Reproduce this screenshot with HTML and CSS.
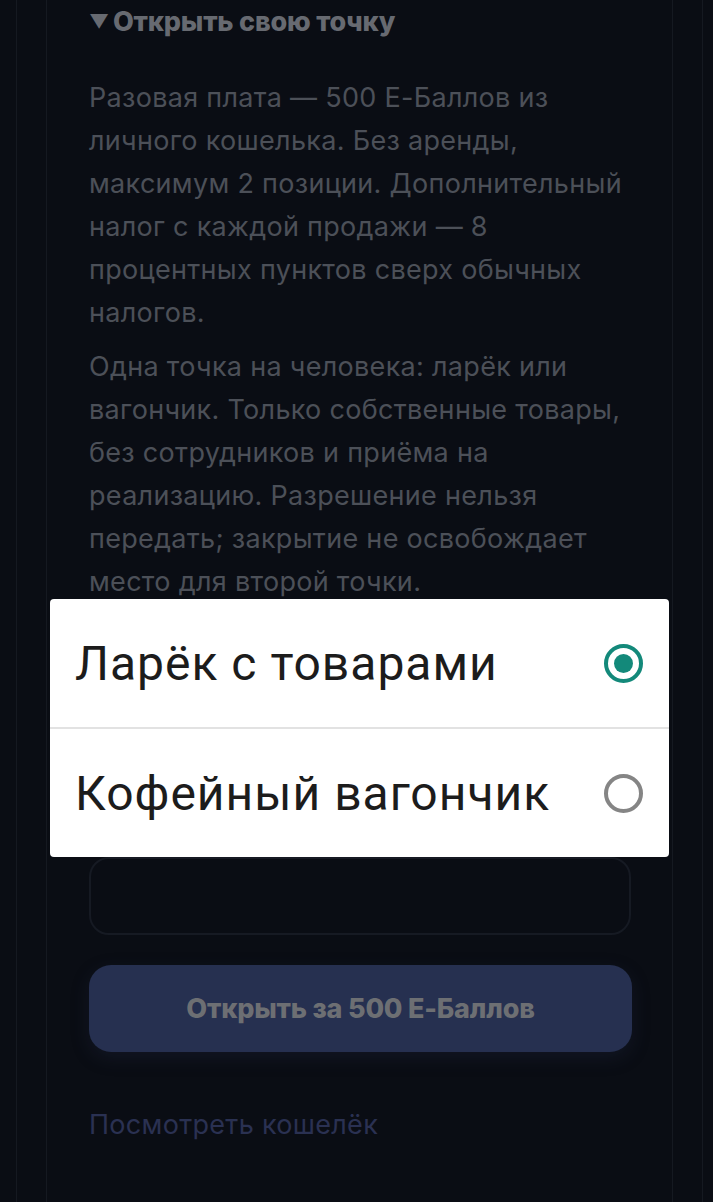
FILE: index.html
```html
<!DOCTYPE html>
<html lang="ru">
<head>
<meta charset="utf-8">
<title>Открыть свою точку</title>
<link rel="stylesheet" href="styles.css">
</head>
<body>
<div class="frame">
  <div class="panel">
    <div class="content">
      <div class="summary"><span class="tri">▼</span>Открыть свою точку</div>
      <p class="text first">Разовая плата — 500 Е-Баллов из личного кошелька. Без аренды, максимум 2 позиции. Дополнительный налог с каждой продажи — 8 процентных пунктов сверх обычных налогов.</p>
      <p class="text">Одна точка на человека: ларёк или вагончик. Только собственные товары, без сотрудников и приёма на реализацию. Разрешение нельзя передать; закрытие не освобождает место для второй точки.</p>
      <div class="hidden-fields">
        <div class="field-label">Тип точки</div>
        <div class="select-box">Ларёк с товарами</div>
        <div class="field-label">Название</div>
      </div>
      <div class="input-box"></div>
      <button class="btn">Открыть за 500 Е-Баллов</button>
      <a class="link">Посмотреть кошелёк</a>
    </div>
  </div>
</div>

<div class="dialog">
  <div class="option">
    <span class="opt-text">Ларёк с товарами</span>
    <span class="radio checked"></span>
  </div>
  <div class="option">
    <span class="opt-text">Кофейный вагончик</span>
    <span class="radio"></span>
  </div>
</div>
</body>
</html>
```

FILE: styles.css
```css
html, body {
  margin: 0;
  padding: 0;
  background: #0a0d14;
  height: 1202px;
  overflow: hidden;
}

body {
  font-family: Inter, "Noto Sans", sans-serif;
  position: relative;
}

.frame {
  margin-left: 16px;
  width: 685px;
  height: 1202px;
  border-left: 1px solid #151921;
  border-right: 1px solid #151921;
}

.panel {
  margin-left: 29px;
  width: 625px;
  height: 1202px;
  border-left: 1px solid #151921;
  border-right: 1px solid #151921;
}

.content {
  padding: 6px 35px 0 42px;
}

.summary {
  font-weight: 800;
  font-size: 27px;
  line-height: 32px;
  color: #676a71;
  letter-spacing: -0.2px;
  white-space: nowrap;
}

.tri {
  font-size: 19px;
  display: inline-block;
  margin-right: 4px;
  vertical-align: 3px;
}

.text {
  margin: 11px 0 0 0;
  font-size: 27px;
  line-height: 43px;
  color: #4c5058;
  letter-spacing: 0.3px;
}

.text.first {
  margin-top: 38px;
}

.hidden-fields {
  height: 254px;
  visibility: hidden;
}

.input-box {
  border: 2px solid #161a23;
  border-radius: 20px;
  box-sizing: border-box;
  height: 78px;
  margin-right: 6px;
}

.btn {
  display: block;
  width: calc(100% - 5px);
  margin-top: 30px;
  height: 87px;
  border: none;
  border-radius: 22px;
  background: #263050;
  color: #6d6f73;
  font-family: Inter, sans-serif;
  font-weight: 800;
  font-size: 27px;
  letter-spacing: -0.2px;
  box-shadow: 0 6px 18px rgba(38, 48, 80, 0.25);
}

.link {
  display: block;
  margin-top: 57px;
  font-size: 27px;
  line-height: 32px;
  color: #2a3152;
  letter-spacing: 0.3px;
}

.dialog {
  position: absolute;
  left: 50px;
  top: 599px;
  width: 619px;
  background: #ffffff;
  border-radius: 4px;
}

.option {
  height: 128px;
  display: flex;
  align-items: center;
  justify-content: space-between;
  padding: 0 26px 0 25px;
}

.option + .option {
  border-top: 2px solid #e2e2e2;
}

.opt-text {
  font-family: Roboto, sans-serif;
  font-size: 48px;
  color: #1c1c1c;
  letter-spacing: 1px;
}

.radio {
  width: 39px;
  height: 39px;
  box-sizing: border-box;
  border-radius: 50%;
  border: 4px solid #858585;
  position: relative;
}

.radio.checked {
  border-color: #13897a;
}

.radio.checked::after {
  content: "";
  position: absolute;
  left: 6px;
  top: 6px;
  width: 19px;
  height: 19px;
  border-radius: 50%;
  background: #13897a;
}
```
